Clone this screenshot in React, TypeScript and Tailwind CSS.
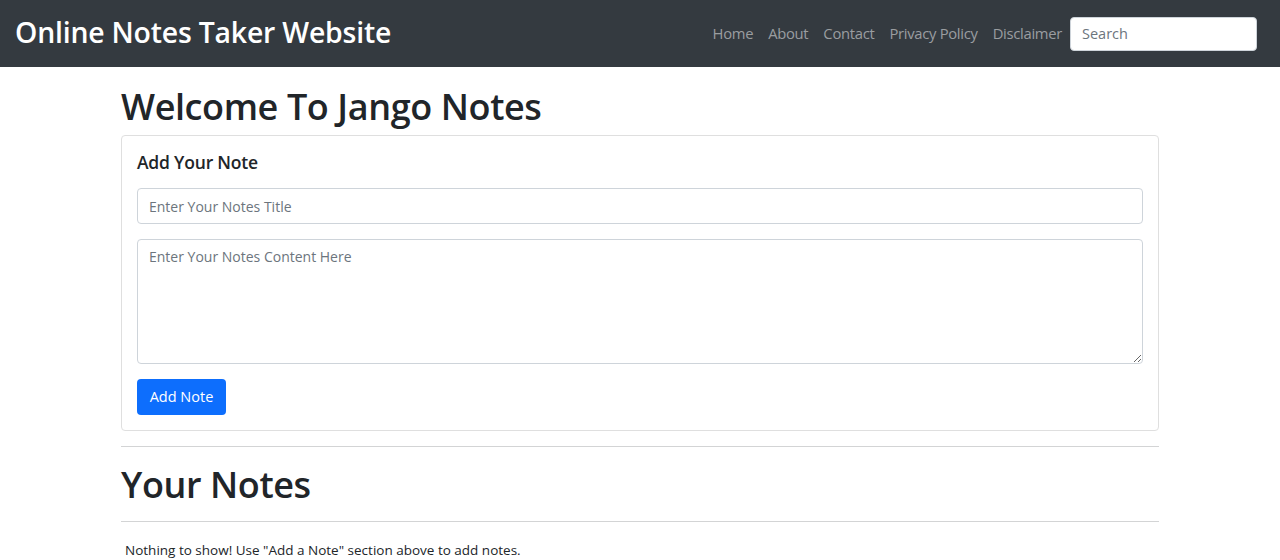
import React from "react";

export default function App() {
  const font = { fontFamily: '"Open Sans", "Noto Sans", sans-serif' };
  return (
    <div className="min-h-[560px] bg-white text-[#212529]" style={font}>
      <nav className="h-[67px] bg-[#343a40] flex items-center justify-between pl-[15px] pr-[23px]">
        <a className="text-white text-[28.4px] font-semibold tracking-[-0.2px] leading-none mb-[3px]">Online Notes Taker Website</a>
        <div className="flex items-center">
          <ul className="flex items-center gap-[15px] text-[14.8px] text-[#9a9da0] mr-[8px] tracking-[-0.3px]">
            <li>Home</li>
            <li>About</li>
            <li>Contact</li>
            <li>Privacy Policy</li>
            <li>Disclaimer</li>
          </ul>
          <input
            placeholder="Search"
            className="w-[187px] h-[34px] bg-white rounded-[4px] border border-[#ced4da] px-[11px] text-[14.5px] placeholder:text-[#6c757d] outline-none"
          />
        </div>
      </nav>

      <main className="w-[1038px] mx-auto">
        <h1 className="h-[46px] mt-[17px] mb-[5px] flex items-center text-[36px] font-semibold tracking-[-0.4px] leading-none">
          Welcome To Jango Notes
        </h1>
        <div className="h-[296px] border border-[#dfdfdf] rounded-[4px] px-[15px] pt-[16px]">
          <h5 className="h-[22px] flex items-center text-[17.5px] font-semibold leading-none tracking-[-0.2px]">Add Your Note</h5>
          <input
            placeholder="Enter Your Notes Title"
            className="mt-[14px] block w-full h-[36px] border border-[#ced4da] rounded-[4px] px-[11px] text-[14px] placeholder:text-[#6c757d] outline-none"
          />
          <textarea
            placeholder="Enter Your Notes Content Here"
            className="mt-[15px] block w-full h-[125px] border border-[#ced4da] rounded-[4px] px-[11px] pt-[6px] pb-[8px] text-[14px] placeholder:text-[#6c757d] outline-none resize-y"
          />
          <button className="mt-[15px] h-[36px] w-[89px] bg-[#0d6efd] text-white rounded-[4px] text-[14.5px]">Add Note</button>
        </div>
        <hr className="mt-[15px] border-0 h-px bg-[#d3d4d5]" />
        <h1 className="h-[46px] mt-[15px] flex items-center text-[36px] font-semibold tracking-[-0.4px] leading-none">
          Your Notes
        </h1>
        <hr className="mt-[13px] border-0 h-px bg-[#d3d4d5]" />
        <p className="mt-[19px] pl-[4px] text-[13.5px] leading-[18px]">
          Nothing to show! Use "Add a Note" section above to add notes.
        </p>
      </main>
    </div>
  );
}
